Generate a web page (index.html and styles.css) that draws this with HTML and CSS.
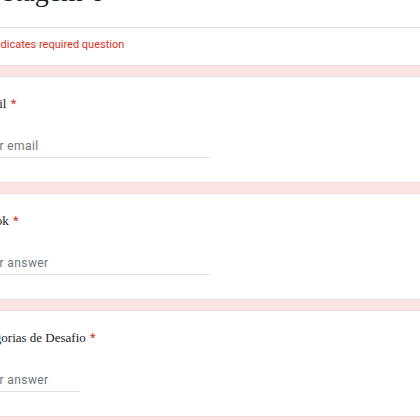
FILE: index.html
```html
<!DOCTYPE html>
<html lang="pt">
<head>
    <meta charset="UTF-8">
    <meta name="viewport" content="width=device-width, initial-scale=1.0">
    <title>Postagem 6</title>
    <link rel="stylesheet" href="styles.css">
</head>
<body>
    <div class="form">
        <div class="card header">
            <div class="title-box">
                <h1 class="title">Postagem 6</h1>
            </div>
            <div class="required-note">* Indicates required question</div>
        </div>

        <div class="card question">
            <div class="label">E-mail <span class="star">*</span></div>
            <div class="field long">Your email</div>
        </div>

        <div class="card question">
            <div class="label">TikTok <span class="star">*</span></div>
            <div class="field long">Your answer</div>
        </div>

        <div class="card question">
            <div class="label">Categorias de Desafio <span class="star">*</span></div>
            <div class="field short">Your answer</div>
        </div>
    </div>
</body>
</html>
```

FILE: styles.css
```css
body {
    margin: 0;
    background: #fbe3e3;
    overflow: hidden;
    font-family: Roboto, "Liberation Sans", sans-serif;
}
.form {
    width: 640px;
    margin-left: -57px;
    margin-top: -42px;
    display: flex;
    flex-direction: column;
    gap: 10px;
}
.card {
    background: #fff;
    border: 1px solid #f1dcdc;
    border-radius: 8px;
}
.title-box {
    padding: 16px 24px 18px 30px;
    border-bottom: 1px solid #e2e2e2;
}
.title {
    margin: 0;
    font-family: "Liberation Serif", serif;
    font-weight: normal;
    font-size: 28px;
    line-height: 34px;
    color: #202124;
}
.required-note {
    padding: 8px 24px 11px 40px;
    font-size: 11px;
    line-height: 18px;
    color: #d93025;
}
.question {
    padding: 17px 24px 24px;
}
.label {
    padding-left: 3px;
    font-family: "Liberation Serif", serif;
    font-size: 13px;
    line-height: 20px;
    color: #202124;
}
.star {
    margin-left: 1px;
    color: #d93025;
    font-family: Roboto, sans-serif;
}
.field {
    margin-top: 23px;
    padding: 0 0 2px 10px;
    border-bottom: 1px solid #e2e2e2;
    font-size: 12px;
    line-height: 18px;
    letter-spacing: 0.4px;
    color: #70757a;
}
.long {
    width: 232px;
}
.short {
    width: 102px;
}
```
